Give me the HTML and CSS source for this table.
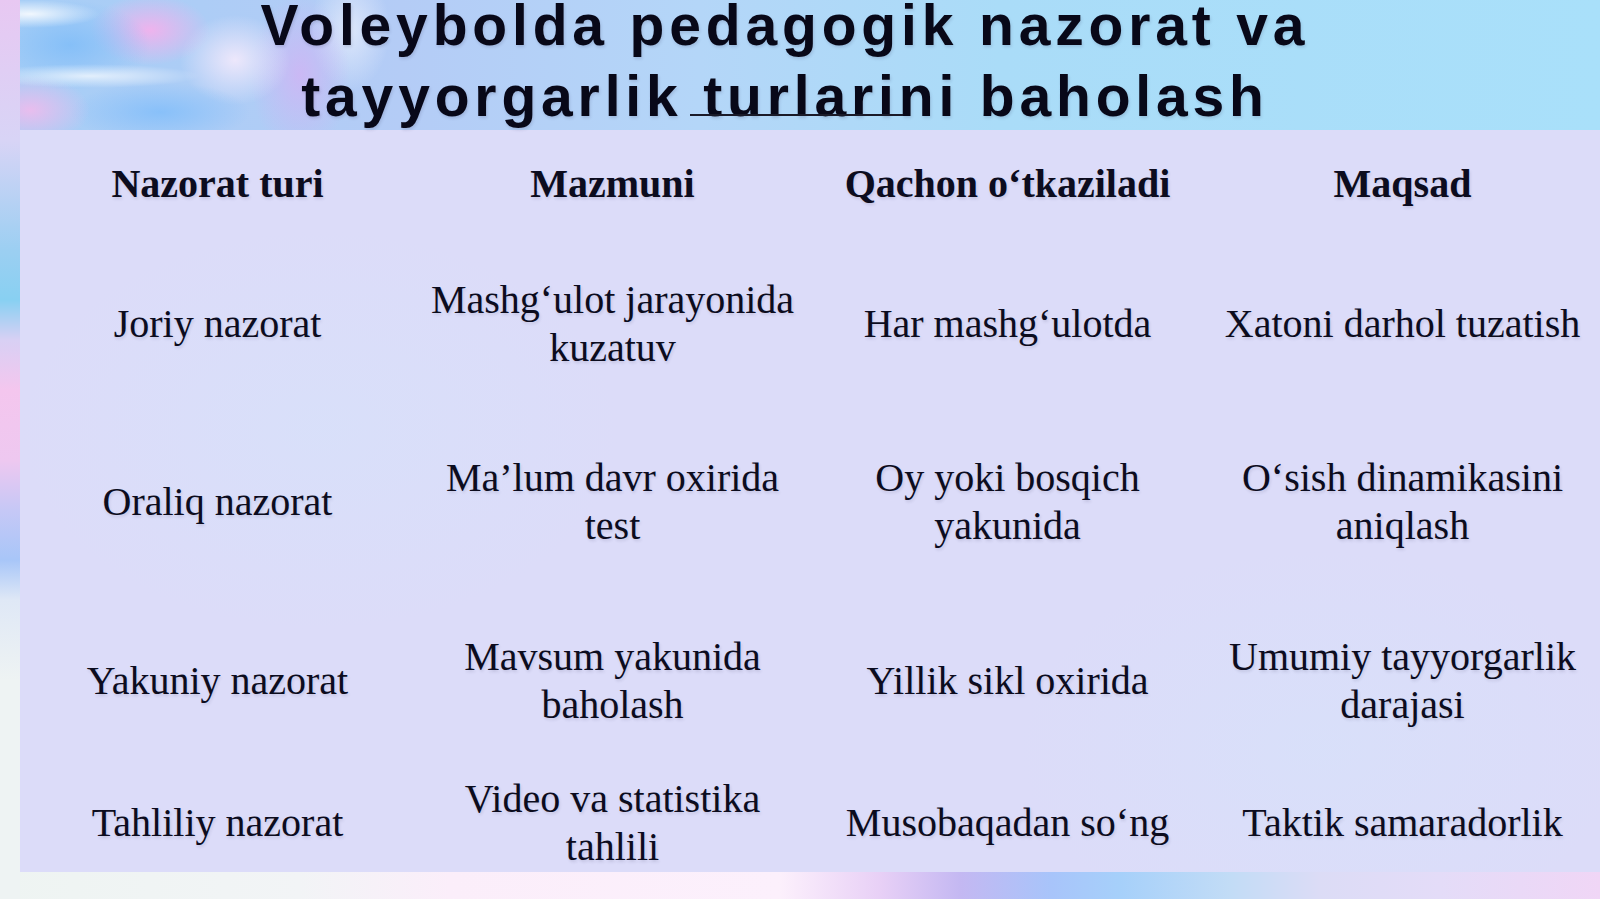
FILE: index.html
```html
<!DOCTYPE html>
<html lang="uz">
<head>
<meta charset="utf-8">
<title>Voleybolda pedagogik nazorat</title>
<link rel="stylesheet" href="styles.css">
</head>
<body>
<div class="slide">
  <header class="title-area">
    <h1 class="title">
      <span class="title-line">Voleybolda pedagogik nazorat va</span>
      <span class="title-line">tayyorgarlik turlarini baholash</span>
    </h1>
    <div class="stray-line"></div>
  </header>
  <section class="panel">
    <div class="row row-head">
      <div class="cell">Nazorat turi</div>
      <div class="cell">Mazmuni</div>
      <div class="cell">Qachon o‘tkaziladi</div>
      <div class="cell">Maqsad</div>
    </div>
    <div class="row row-1">
      <div class="cell">Joriy nazorat</div>
      <div class="cell">Mashg‘ulot jarayonida kuzatuv</div>
      <div class="cell">Har mashg‘ulotda</div>
      <div class="cell">Xatoni darhol tuzatish</div>
    </div>
    <div class="row row-2">
      <div class="cell">Oraliq nazorat</div>
      <div class="cell">Ma’lum davr oxirida test</div>
      <div class="cell">Oy yoki bosqich yakunida</div>
      <div class="cell">O‘sish dinamikasini aniqlash</div>
    </div>
    <div class="row row-3">
      <div class="cell">Yakuniy nazorat</div>
      <div class="cell">Mavsum yakunida baholash</div>
      <div class="cell">Yillik sikl oxirida</div>
      <div class="cell">Umumiy tayyorgarlik darajasi</div>
    </div>
    <div class="row row-4">
      <div class="cell">Tahliliy nazorat</div>
      <div class="cell">Video va statistika tahlili</div>
      <div class="cell">Musobaqadan so‘ng</div>
      <div class="cell">Taktik samaradorlik</div>
    </div>
  </section>
</div>
</body>
</html>
```

FILE: styles.css
```css
html, body {
  margin: 0;
  padding: 0;
}
body {
  width: 1600px;
  height: 899px;
  overflow: hidden;
}
.slide {
  position: relative;
  width: 1600px;
  height: 899px;
  display: flex;
  flex-direction: column;
  overflow: hidden;
  background:
    /* left strip */
    linear-gradient(to bottom,
      #e8c8f2 0px, #d8d4f6 140px, #9ccff2 250px, #88d0f2 300px,
      #d8d0f4 340px, #f4c6ee 390px, #eec8f0 460px, #c6c8f6 510px,
      #a8c6f8 560px, #dfe8f6 600px, #eef3f3 680px, #eef3f3 899px) left top / 20px 899px no-repeat,
    /* bottom strip */
    linear-gradient(to right,
      #eef4f2 0px, #f2f4f6 300px, #fbeefa 450px, #fcf0fc 780px,
      #e8d0f6 880px, #c4b8f2 960px, #a8c4fa 1050px, #a6d0fa 1120px,
      #c2dcf6 1230px, #dcdcf6 1320px, #e4dcf8 1440px, #f0d6f6 1600px) left bottom / 1600px 30px no-repeat,
    /* top swirls */
    radial-gradient(ellipse 70px 14px at 30px 14px, rgba(255,255,255,0.85), rgba(255,255,255,0) 100%),
    radial-gradient(ellipse 110px 12px at 90px 76px, rgba(255,255,255,0.7), rgba(255,255,255,0) 100%),
    radial-gradient(ellipse 80px 45px at 70px 45px, rgba(130,190,248,0.9), rgba(130,190,248,0) 100%),
    radial-gradient(ellipse 60px 35px at 150px 30px, rgba(246,176,236,0.9), rgba(246,176,236,0) 100%),
    radial-gradient(ellipse 60px 35px at 30px 110px, rgba(244,186,236,0.85), rgba(244,186,236,0) 100%),
    radial-gradient(ellipse 90px 30px at 160px 112px, rgba(130,190,250,0.85), rgba(130,190,250,0) 100%),
    radial-gradient(ellipse 55px 45px at 235px 60px, rgba(248,236,252,0.85), rgba(248,236,252,0) 100%),
    radial-gradient(ellipse 50px 80px at 300px 75px, rgba(214,176,244,0.7), rgba(214,176,244,0) 100%),
    radial-gradient(ellipse 40px 60px at 350px 30px, rgba(236,240,252,0.75), rgba(236,240,252,0) 100%),
    linear-gradient(to right, #a6cef6 0px, #b4ccf6 400px, #b4d6f8 700px, #aadcf8 1000px, #a9e0fa 1600px);
}

.title-area {
  position: relative;
  height: 130px;
  flex: 0 0 130px;
}
.title {
  margin: -10px 0 0 0;
  padding-right: 30px;
  font-family: "Liberation Sans", Arial, sans-serif;
  font-weight: 700;
  font-size: 57px;
  line-height: 71px;
  letter-spacing: 4.85px;
  color: #080818;
  text-align: center;
  text-shadow: 1px 2px 3px rgba(40, 40, 80, 0.15);
}
.title-line {
  display: block;
}
.stray-line {
  position: absolute;
  left: 690px;
  top: 114px;
  width: 213px;
  height: 2px;
  background: #1a1a28;
}

.panel {
  flex: 0 0 742px;
  height: 742px;
  margin-left: 20px;
  overflow: hidden;
  background:
    radial-gradient(ellipse 300px 200px at 300px 300px, rgba(214,226,250,0.6), rgba(214,226,250,0) 100%),
    radial-gradient(ellipse 300px 200px at 1300px 620px, rgba(214,226,250,0.6), rgba(214,226,250,0) 100%),
    #dcdcf9;
  font-family: "Liberation Serif", "Times New Roman", serif;
  font-size: 40px;
  line-height: 48px;
  color: #0c0c1e;
  text-shadow: 1px 2px 3px rgba(40, 40, 80, 0.13);
}
.row {
  display: grid;
  grid-template-columns: repeat(4, 1fr);
  align-items: center;
}
.cell {
  text-align: center;
  padding: 0 6px;
}
.row-head {
  height: 108px;
  font-weight: 700;
}
.row-1 { height: 171px; }
.row-2 { height: 186px; }
.row-3 { height: 172px; }
.row-4 { height: 111px; }
```
